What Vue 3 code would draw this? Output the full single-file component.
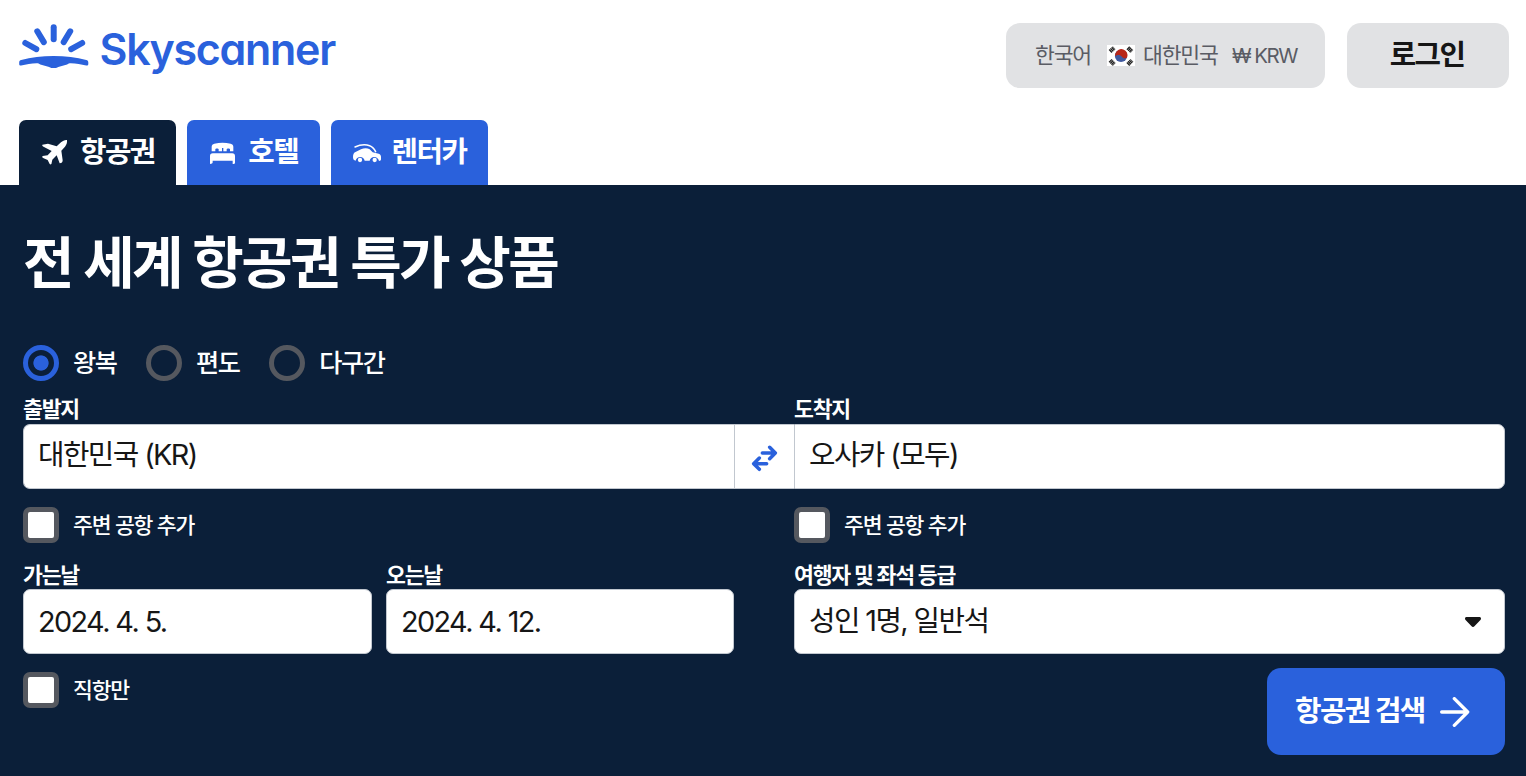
<template>
    <div class="page">
        <header class="header">
            <a class="logo" aria-label="Skyscanner">
                <svg viewBox="0 0 350 80" width="350" height="80">
                    <g fill="none" stroke="#2a61dc" stroke-width="6" stroke-linecap="round">
                        <path d="M53.700 17.300v12" />
                        <path d="M37.300 21.300l6.500 10.800" />
                        <path d="M70.200 21.300l-6.500 10.800" />
                        <path d="M25.300 33l11 6.200" />
                        <path d="M82.200 33l-11 6.200" />
                    </g>
                    <path fill="#2a61dc"
                        d="M19.200 52.500c0-1.200.8-2.100 2-2.400C31 47.300 42 46 53.700 46s22.800 1.300 32.600 4.100c1.200.3 2 1.200 2 2.400v1.500c0 1.100-.9 1.700-2 1.500-5.300-1-10-1.900-15.500-2.200-1.500 0-2.600.4-3.700 1.100l-8 2.300c-1 .3-3.200 1.800-5.400 1.300-2.200.5-4.400-1-5.400-1.300l-8-2.300c-1.100-.7-2.200-1.100-3.700-1.100-5.500.3-10.200 1.200-15.500 2.200-1.100.2-1.900-.4-1.900-1.500z" />
                    <text class="wordmark" x="99.500" y="54.700" textLength="235.500" lengthAdjust="spacingAndGlyphs">Skyscanner</text>
                </svg>
            </a>
            <div class="header-actions">
                <button class="btn-culture">
                    <span class="lang">한국어</span>
                    <svg class="flag" viewBox="0 0 82 63" width="28" height="21.5">
                        <rect width="82" height="63" fill="#fff" />
                        <circle cx="41" cy="32" r="18" fill="#405a9f" />
                        <path d="M25 24a18 18 0 1 1 34 12c-3 5-13 4-16-2-4-8-17-5-19-1-1-3 0-6 1-9z" fill="#b82619" />
                        <g stroke="#222" stroke-width="12" stroke-dasharray="4 1">
                            <path d="M9 19l12-11" />
                            <path d="M61 8l12 11" />
                            <path d="M9 45l12 12" />
                            <path d="M61 57l12-12" />
                        </g>
                    </svg>
                    <span class="country">대한민국</span>
                    <span class="currency">₩ KRW</span>
                </button>
                <button class="btn-login">로그인</button>
            </div>
        </header>

        <nav class="tabs">
            <a class="tab active">
                <svg viewBox="126 87 84 81" width="28" height="27">
                    <path fill="currentColor"
                        d="M204 90c-6-1-13 2-18 7l-13 12-26-8-17 3c-1 3 1 5 5 7l23 12-12 13-15 2c-3 3-1 5 3 7l12 5 6 12c3 3 6 0 6-4l2-9 13-13 9 24c6 0 9-3 9-9l-4-29 11-12c5-6 7-13 6-20z" />
                </svg>
                <span>항공권</span>
            </a>
            <a class="tab">
                <svg viewBox="90 84 84 81" width="28" height="27">
                    <path fill="currentColor"
                        d="M98 121v-14c0-5 3-8 8-9 16-4 33-4 49 0 5 1 8 4 8 9v14h-10v-6c0-3-10-3-10 0v6h-10v-10h-4v10h-10v-6c0-3-10-3-10 0v6z" />
                    <path fill="currentColor" d="M93 159v-24c0-5 3-8 8-8h59c5 0 8 3 8 8v20c0 3-3 4-7 4v-10h-60v5c0 3-3 5-8 5z" />
                </svg>
                <span>호텔</span>
            </a>
            <a class="tab">
                <svg viewBox="519 84 84 81" width="28" height="27">
                    <path fill="currentColor"
                        d="M519 139c0-9 2-15 9-17l15-7c9-4 19-4 26 0l9 9 18 4c5 2 7 5 7 10v7c0 3-2 5-6 5-1-6-7-12-14-12s-13 5-14 11h-15c-1-6-7-11-13-11-7 0-13 5-14 11-5 0-8-4-8-10z" />
                    <path fill="none" stroke="currentColor" stroke-width="4.500" stroke-linecap="round"
                        d="M525 108c13-6 32-8 44-4 9 3 14 10 18 18" />
                    <circle cx="540" cy="147" r="6.500" fill="currentColor" />
                    <circle cx="584" cy="147" r="6.500" fill="currentColor" />
                </svg>
                <span>렌터카</span>
            </a>
        </nav>

        <main class="search">
            <h1>전 세계 항공권 특가 상품</h1>

            <div class="trip-types">
                <label v-for="t in tripTypes" :key="t.value" class="radio">
                    <input type="radio" v-model="trip" :value="t.value" />
                    <span>{{ t.label }}</span>
                </label>
            </div>

            <div class="labels">
                <span class="label">출발지</span>
                <span class="label">도착지</span>
            </div>
            <div class="route">
                <div class="field"><span>{{ origin }}</span></div>
                <button class="swap" aria-label="swap" @click="swap">
                    <svg viewBox="153 165 81 81" width="27" height="27">
                        <g fill="none" stroke="#2a61dc" stroke-width="10.500" stroke-linecap="round" stroke-linejoin="round">
                            <path d="M187 189h38M209 172l17 17-17 17" />
                            <path d="M200 221h-38M178 204l-17 17 17 17" />
                        </g>
                    </svg>
                </button>
                <div class="field"><span>{{ destination }}</span></div>
            </div>
            <div class="columns nearby">
                <label class="check"><input type="checkbox" v-model="nearFrom" /><span>주변 공항 추가</span></label>
                <label class="check"><input type="checkbox" v-model="nearTo" /><span>주변 공항 추가</span></label>
            </div>

            <div class="columns details">
                <div class="dates">
                    <div class="date">
                        <span class="label">가는날</span>
                        <div class="field num"><span>2024. 4. 5.</span></div>
                    </div>
                    <div class="date">
                        <span class="label">오는날</span>
                        <div class="field num"><span>2024. 4. 12.</span></div>
                    </div>
                </div>
                <div class="travellers">
                    <span class="label">여행자 및 좌석 등급</span>
                    <div class="field select">
                        <span>성인 1명, 일반석</span>
                        <svg class="caret" viewBox="0 0 48 30" width="16" height="10">
                            <path fill="#161616" d="M4 0h40c4 0 5 5 3 8L29 27c-3 4-7 4-10 0L1 8C-1 5 0 0 4 0z" />
                        </svg>
                    </div>
                </div>
            </div>

            <div class="bottom">
                <label class="check"><input type="checkbox" v-model="direct" /><span>직항만</span></label>
                <button class="btn-search">
                    <span>항공권 검색</span>
                    <svg viewBox="570 349 90 90" width="30" height="30">
                        <path fill="none" stroke="#fff" stroke-width="10" stroke-linecap="round" stroke-linejoin="round"
                            d="M575 394h78M613 354l40 40-40 40" />
                    </svg>
                </button>
            </div>
        </main>
    </div>
</template>

<script setup>
import { ref } from 'vue'

const tripTypes = [
    { value: 'return', label: '왕복' },
    { value: 'oneway', label: '편도' },
    { value: 'multi', label: '다구간' },
]

const trip = ref('return')
const origin = ref('대한민국 (KR)')
const destination = ref('오사카 (모두)')
const nearFrom = ref(false)
const nearTo = ref(false)
const direct = ref(false)

function swap() {
    const from = origin.value
    origin.value = destination.value
    destination.value = from
}
</script>

<style>
body {
    margin: 0;
    background: #fff;
}
</style>

<style scoped>
.page {
    width: 1526px;
    height: 776px;
    overflow: hidden;
    display: flex;
    flex-direction: column;
    font-family: Inter, "Noto Sans CJK KR", sans-serif;
    color: #161616;
}

.page * {
    box-sizing: border-box;
    letter-spacing: -0.055em;
}

button {
    border: none;
    padding: 0;
    font-family: inherit;
    cursor: pointer;
}

svg {
    display: block;
    flex: none;
}

/* header */
.header {
    height: 120px;
    flex: none;
    display: flex;
    justify-content: space-between;
    align-items: flex-start;
    padding: 10px 17px 0 0;
}

.page .wordmark {
    font-family: Inter, sans-serif;
    font-size: 43.5px;
    font-weight: 600;
    font-feature-settings: "cv11";
    letter-spacing: -0.03em;
    fill: #2a61dc;
}

.header-actions {
    display: flex;
    gap: 22px;
    padding-top: 13px;
}

.btn-culture,
.btn-login {
    height: 65px;
    border-radius: 14px;
    background: #e1e2e4;
    display: flex;
    align-items: center;
}

.btn-culture {
    width: 319px;
    padding-left: 29px;
    font-size: 21.6px;
    color: #5a5c64;
}

.btn-culture .lang,
.btn-culture .country {
    padding-bottom: 4px;
}

.lang {
    width: 72px;
    text-align: left;
}

.country {
    width: 89px;
    margin-left: 8px;
    text-align: left;
}

.page .currency {
    font-size: 20.5px;
    letter-spacing: -0.075em;
}

.btn-login {
    width: 162px;
    justify-content: center;
    padding-right: 2px;
    padding-bottom: 6px;
    font-size: 28.8px;
    font-weight: 700;
    color: #161616;
}

/* tabs */
.tabs {
    height: 65px;
    flex: none;
    display: flex;
    gap: 11px;
    padding-left: 19px;
}

.tab {
    display: flex;
    align-items: center;
    gap: 11px;
    padding: 0 21.5px 0 22px;
    border-radius: 7px 7px 0 0;
    background: #2a61dc;
    color: #fff;
    font-size: 28.8px;
    font-weight: 700;
    white-space: nowrap;
}

.tab span {
    padding-bottom: 6px;
}

.tab.active {
    background: #0b1f39;
}

/* search panel */
.search {
    flex: 1;
    padding: 0 21px 0 23px;
    background: #0b1f39;
    color: #fff;
}

.page h1 {
    margin: 0;
    height: 160px;
    line-height: 156px;
    font-size: 56px;
    font-weight: 700;
    letter-spacing: -0.047em;
    word-spacing: 0.012em;
}

.trip-types {
    display: flex;
    height: 36px;
    gap: 29.5px;
    font-size: 25.2px;
}

.radio,
.check {
    display: flex;
    align-items: center;
    gap: 14px;
    height: 36px;
    font-weight: 500;
    white-space: nowrap;
}

.radio span {
    padding-bottom: 4px;
}

.check span {
    padding-bottom: 3px;
}

.radio input,
.check input {
    appearance: none;
    flex: none;
    width: 36px;
    height: 36px;
    margin: 0;
    border: 5px solid #55585f;
}

.radio input {
    border-radius: 50%;
}

.radio input:checked {
    border-color: #2a61dc;
    background: radial-gradient(circle, #2a61dc 7.2px, transparent 8px);
}

.check input {
    border-radius: 7px;
    background: #fff;
}

.check {
    font-size: 21.6px;
}

.label {
    display: block;
    height: 29px;
    line-height: 29px;
    font-size: 21.6px;
    font-weight: 700;
}

.labels {
    display: grid;
    grid-template-columns: 711px 711px;
    gap: 60px;
    margin-top: 14px;
}

.field {
    height: 65px;
    display: flex;
    align-items: center;
    padding: 0 14px 8px;
    border: 1px solid #c1c7cf;
    border-radius: 7px;
    background: #fff;
    color: #161616;
    font-size: 28.8px;
}

.num {
    padding-bottom: 0;
}

.route {
    display: grid;
    grid-template-columns: 711px 60px 711px;
}

.route .field:first-child {
    border-radius: 7px 0 0 7px;
    border-right: 0;
}

.route .field:last-child {
    border-radius: 0 7px 7px 0;
}

.swap {
    display: flex;
    align-items: center;
    justify-content: center;
    padding-top: 3px;
    background: #fff;
    border: 1px solid #c1c7cf;
    border-right: 0;
}

.columns {
    display: grid;
    grid-template-columns: 711px 711px;
    gap: 60px;
}

.nearby {
    margin-top: 18px;
}

.details {
    margin-top: 17px;
}

.details .label {
    line-height: 31px;
}

.dates {
    display: grid;
    grid-template-columns: 349px 348px;
    gap: 14px;
}

.select {
    justify-content: space-between;
    padding-right: 23px;
    padding-bottom: 6px;
}

.caret {
    margin-top: 7px;
}

.bottom {
    display: flex;
    justify-content: space-between;
    align-items: flex-start;
    padding-top: 14px;
}

.bottom .check {
    margin-top: 4px;
}

.btn-search {
    width: 238px;
    height: 87px;
    display: flex;
    align-items: center;
    gap: 15px;
    padding-left: 28px;
    border-radius: 14px;
    background: #2a61dc;
    color: #fff;
    font-size: 28.8px;
    font-weight: 700;
}

.btn-search span {
    padding-bottom: 6px;
}
</style>
